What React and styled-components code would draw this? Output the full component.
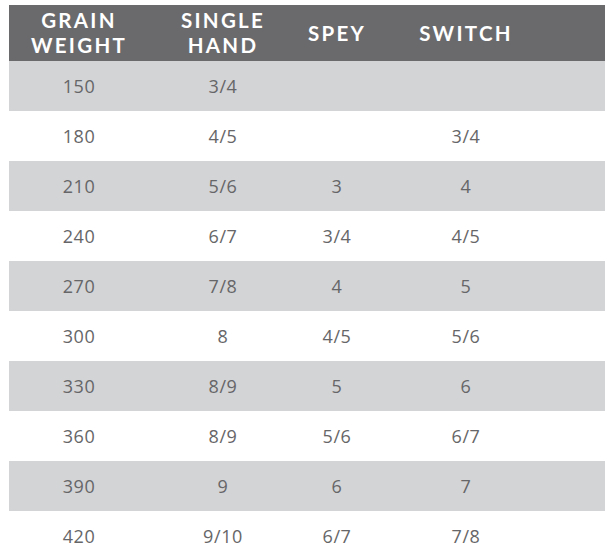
import styled, { createGlobalStyle } from 'styled-components';

const GlobalStyle = createGlobalStyle`
  body {
    margin: 0;
    background: #fff;
    font-family: "Open Sans", "Liberation Sans", sans-serif;
  }
`;

const Wrapper = styled.div`
  padding: 5px 0 0 9px;
`;

const Grid = styled.div`
  display: grid;
  grid-template-columns: 140px 148px 80px 178px 1fr;
`;

const HeadRow = styled.div`
  display: contents;
`;

const HeadCell = styled.div`
  height: 56px;
  display: flex;
  flex-direction: column;
  align-items: center;
  justify-content: center;
  text-align: center;
  background: #6a6a6d;
  color: #fff;
  font-family: Lato, "Open Sans", sans-serif;
  font-weight: 700;
  font-size: 20.5px;
  line-height: 25px;
  letter-spacing: 2.3px;
  white-space: nowrap;
`;

const Row = styled.div`
  display: contents;
`;

const Cell = styled.div`
  height: 50px;
  display: flex;
  align-items: center;
  justify-content: center;
  background: ${(p) => (p.$shaded ? '#d3d4d6' : '#fff')};
  color: #666668;
  font-size: 18px;
  letter-spacing: 0.6px;
`;

const headers = [['GRAIN', 'WEIGHT'], ['SINGLE', 'HAND'], ['SPEY'], ['SWITCH'], []];

const rows = [
  ['150', '3/4', '', ''],
  ['180', '4/5', '', '3/4'],
  ['210', '5/6', '3', '4'],
  ['240', '6/7', '3/4', '4/5'],
  ['270', '7/8', '4', '5'],
  ['300', '8', '4/5', '5/6'],
  ['330', '8/9', '5', '6'],
  ['360', '8/9', '5/6', '6/7'],
  ['390', '9', '6', '7'],
  ['420', '9/10', '6/7', '7/8'],
];

export default function App() {
  return (
    <Wrapper>
      <GlobalStyle />
      <Grid>
        <HeadRow>
          {headers.map((lines, i) => (
            <HeadCell key={i}>
              {lines.map((line) => (
                <span key={line}>{line}</span>
              ))}
            </HeadCell>
          ))}
        </HeadRow>
        {rows.map((row, index) => (
          <Row key={row[0]}>
            {[...row, ''].map((value, j) => (
              <Cell key={j} $shaded={index % 2 === 0}>{value}</Cell>
            ))}
          </Row>
        ))}
      </Grid>
    </Wrapper>
  );
}
